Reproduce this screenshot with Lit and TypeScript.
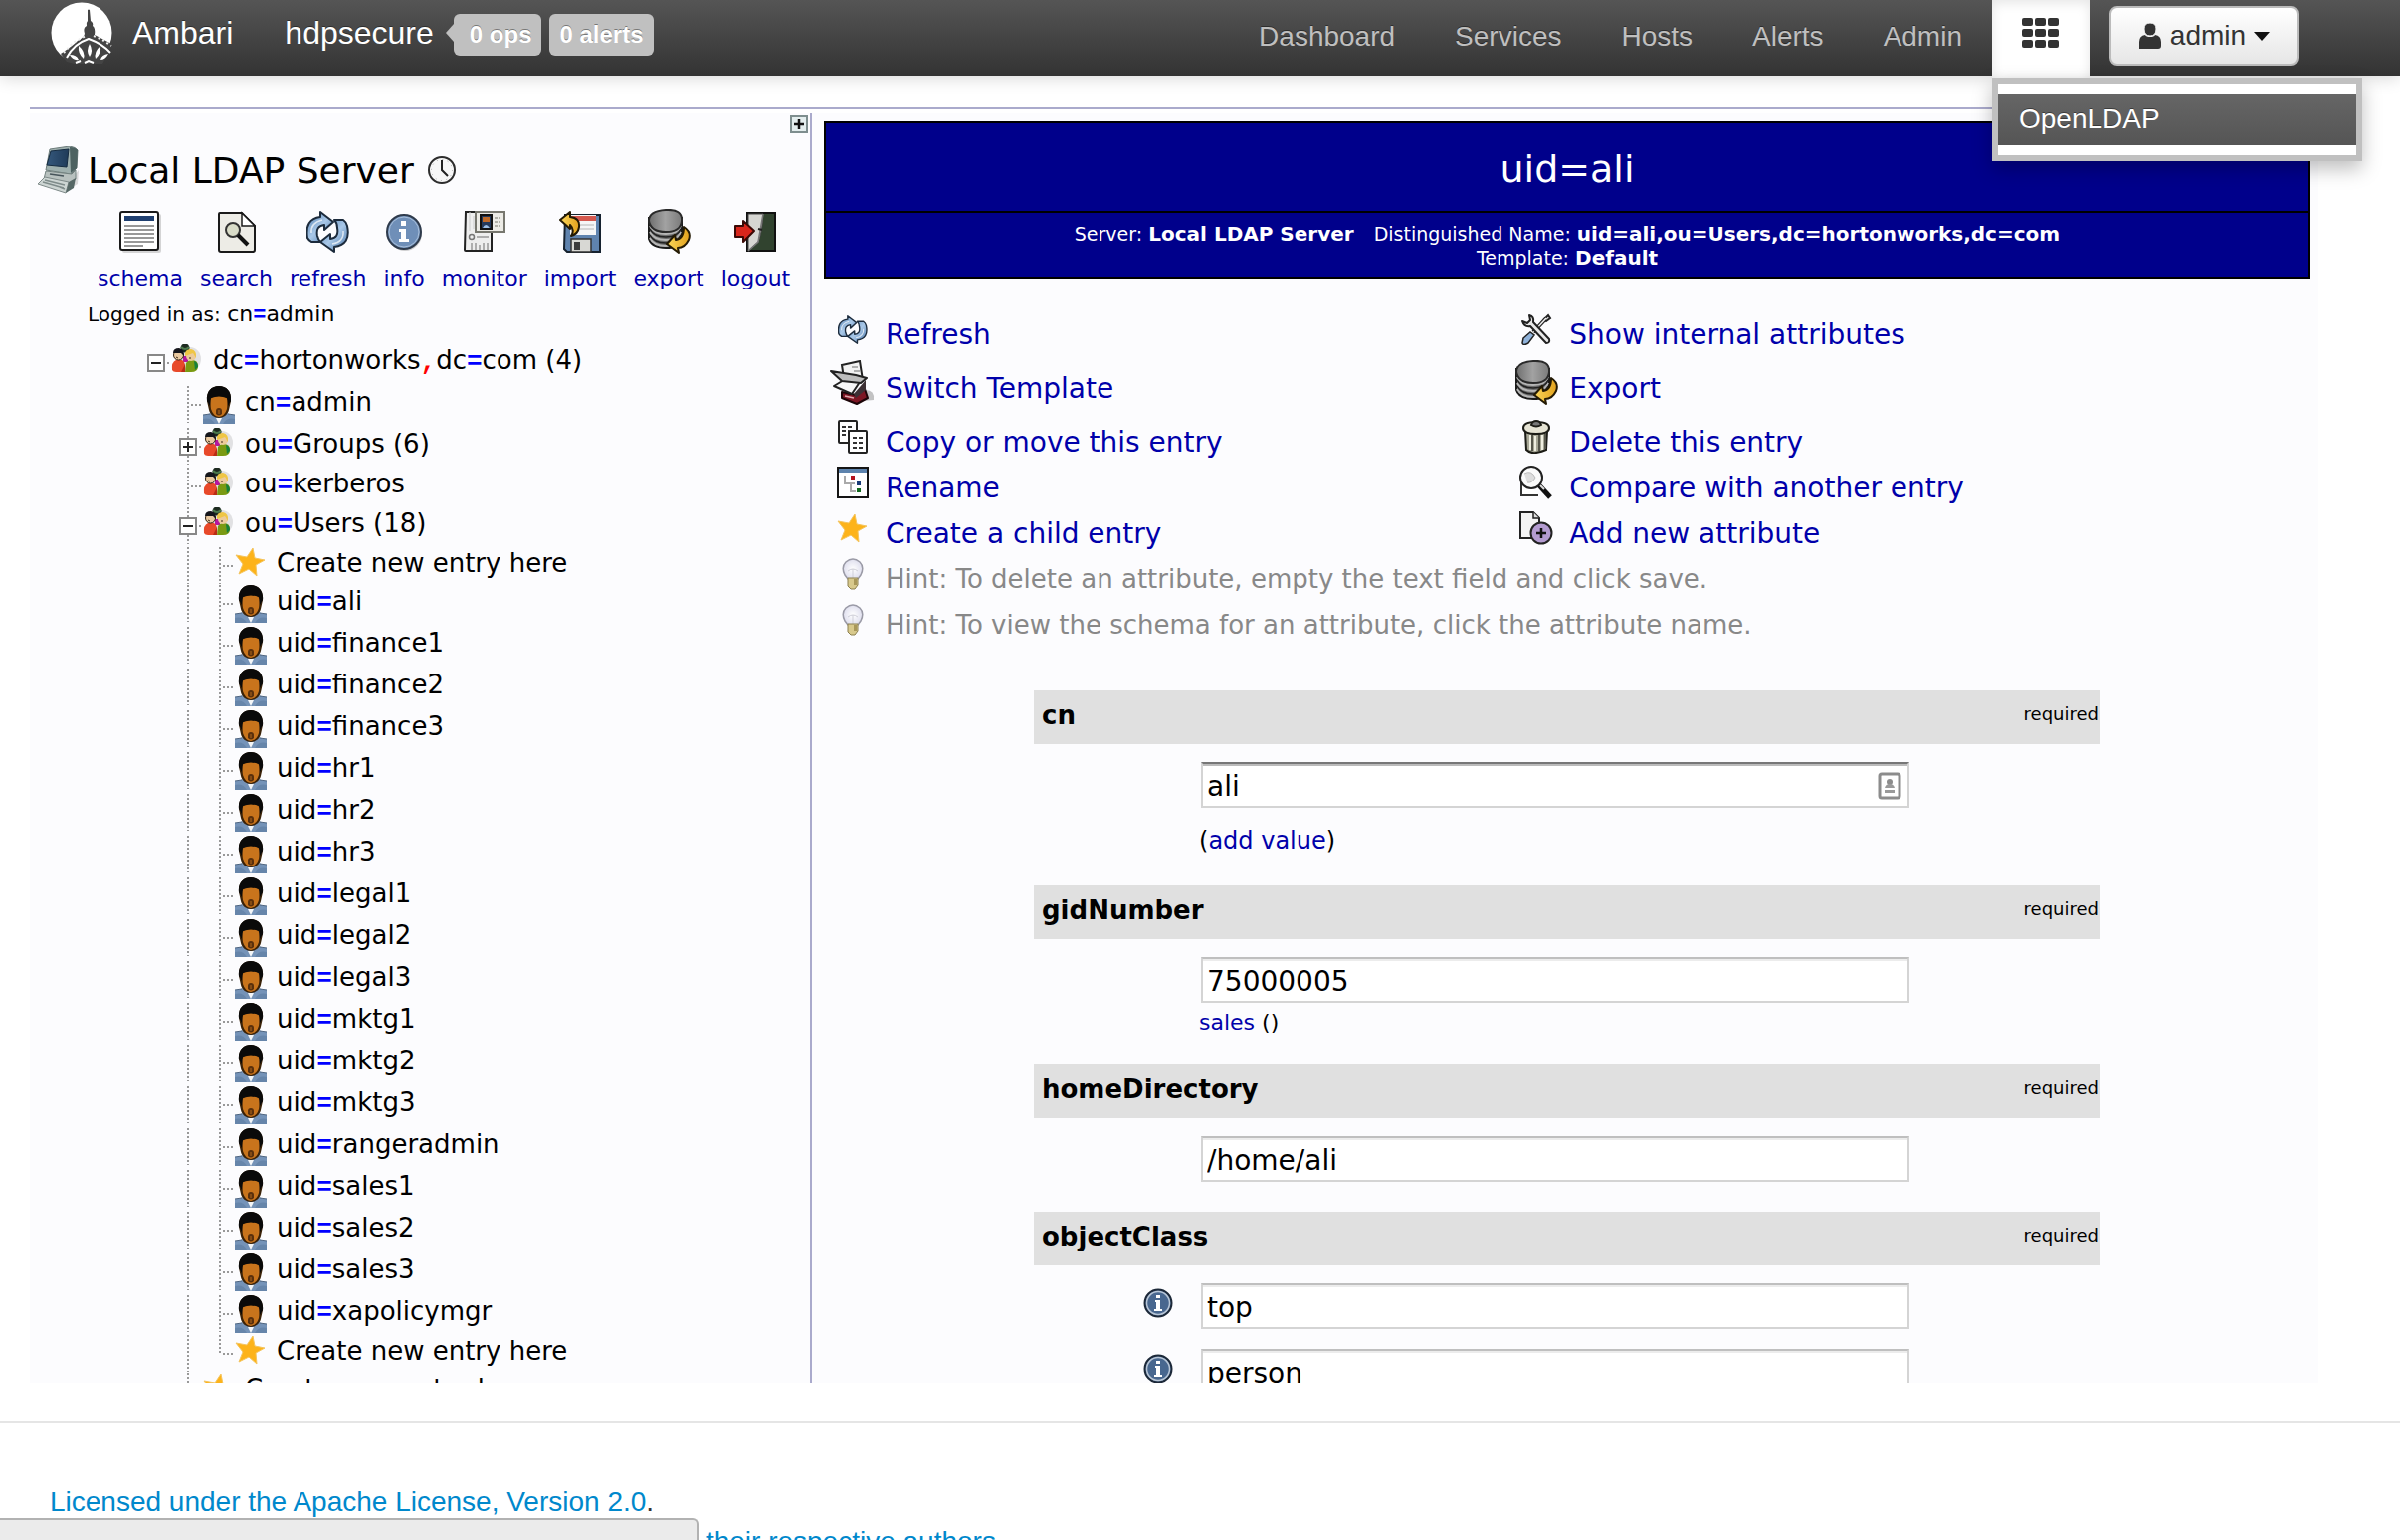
import { LitElement, html, svg, css, nothing, TemplateResult, SVGTemplateResult } from "lit";
import { customElement, property, state } from "lit/decorators.js";
import { classMap } from "lit/directives/class-map.js";

type Icon = { w: number; h: number; art: SVGTemplateResult };

const personArt = svg`
  <path d="M0 38V29Q5 29 8 27H24Q27 29 32 29V38Z" fill="#7593b8"/>
  <path d="M0 38V33Q8 31 12 38ZM32 38V33Q24 31 20 38Z" fill="#6685aa"/>
  <path d="M0 29L7 28M32 29L25 28" stroke="#4f6580" stroke-width="1"/>
  <path d="M13 32L16 38L19 32Z" fill="#f4f6f8"/>
  <path d="M4 15C3 5 9 0 16 0S29 5 28 15L26 24C25 29 20 32 16 32S7 29 6 24Z" fill="#3a2208"/>
  <path d="M7 14Q9 10 16 10T25 14L24 23Q22 30 16 31Q10 30 8 23Z" fill="#c8741c"/>
  <path d="M4 15C3 5 9 0 16 0S29 5 28 15L25 20L24 12Q16 9 8 12L7 20Z" fill="#0a0a0a"/>
  <path d="M13 28V25Q13 22 16 22T19 25V28Q16 31 13 28Z" fill="#5a300c"/>
  <path d="M15 25H17M16 26V28" stroke="#b0661a" stroke-width="1" fill="none"/>`;

const peopleArt = svg`
  <ellipse cx="19" cy="15" rx="11" ry="12" fill="#555" opacity=".16"/>
  <circle cx="14" cy="4" r="4.500" fill="#1d2a20"/>
  <path d="M10 3Q14 7 18 3" stroke="#4d7a4d" stroke-width="2" fill="none"/>
  <path d="M12 12H17V18H12Z" fill="#b5179e"/>
  <path d="M1 26Q0 18 5 16H11Q15 18 14 28H5Q2 28 1 26Z" fill="#e8492a"/>
  <path d="M10 28L14 20V28Z" fill="#b92c14"/>
  <path d="M14 28L15 19Q17 16 21 16Q27 16 27 22Q27 28 20 28Z" fill="#7a9a12"/>
  <path d="M23 17Q27 18 27 23L24 26Z" fill="#16803a"/>
  <circle cx="7.500" cy="11" r="5" fill="#e9c9a0" stroke="#302010" stroke-width="1"/>
  <path d="M2 9Q2 4 8 4Q13 5 13 12L10 9Z" fill="#15161c"/>
  <circle cx="20" cy="12" r="5" fill="#eccb9a"/>
  <path d="M14 12Q13 5 20 5Q26 6 25 14L22 9Z" fill="#efc645"/>
  <path d="M5 13L7 14M18 14H20" stroke="#3c2a1a" stroke-width="1"/>`;

const starArt = svg`
  <path d="M18 1L20 11L30 13L21 18L22 29L14 22L4 27L8 17L1 8L12 10Z" fill="#fdb31a" stroke="#f4c560" stroke-width="1" stroke-linejoin="round"/>`;

const refreshArt = svg`
  <path d="M1 27Q-2 8 14 6V1L27 11L18 19V14Q9 15 11 25Q12 29 14 31H5Q2 29 1 27Z" fill="url(#blueFill)" stroke="#1c2b3c" stroke-width="2" stroke-linejoin="round"/>
  <path d="M41 15Q45 34 28 36V41L14 31L24 23V28Q33 27 31 17Q31 12 28 9H37Q40 11 41 15Z" fill="url(#blueFill)" stroke="#1c2b3c" stroke-width="2" stroke-linejoin="round"/>
  <path d="M5 22Q4 12 16 9M37 20Q38 31 26 33" stroke="#fff" stroke-width="1.500" fill="none" opacity=".7"/>`;

const exportArt = svg`
  <path d="M2 9V30Q5 39 19 39T35 30V9Z" fill="#6c6c6c" stroke="#1a1a1a" stroke-width="2"/>
  <path d="M3 17Q7 25 19 25T34 17M3 23Q7 31 19 31T34 23M3 29Q7 37 19 37T34 29" fill="none" stroke="#b5b5b5" stroke-width="2"/>
  <path d="M3 20Q7 28 19 28T34 20M3 26Q7 34 19 34T34 26" fill="none" stroke="#222" stroke-width="1.500"/>
  <path d="M2 12Q2 2 19 1T35 12Q34 23 19 23T2 12Z" fill="url(#greyFill)" stroke="#2a2a2a" stroke-width="2"/>
  <path d="M37 18Q45 23 42 31Q38 39 31 39L32 44L20 35L28 26L29 31Q37 30 37 18Z" fill="url(#goldFill)" stroke="#241a04" stroke-width="2" stroke-linejoin="round"/>`;

const infoArt = svg`
  <circle cx="20" cy="22" r="17" fill="#777" opacity=".35"/>
  <circle cx="19" cy="20" r="17" fill="#6f8fb8" stroke="#2f3b4c" stroke-width="2"/>
  <circle cx="19" cy="20" r="15" fill="none" stroke="#a9bfda" stroke-width="1"/>
  <path d="M16 9H21V14H16ZM14 17H21V27H24V30H14V27H16V20H14Z" fill="#fff"/>`;

const bulbArt = svg`
  <path d="M3 17Q-1 9 4 4Q11-2 18 4Q23 9 19 17L16 21H6Z" fill="url(#bulbFill)" stroke="#9a9aa6" stroke-width="1.500"/>
  <path d="M6 13Q11 9 16 13M11 11V20" stroke="#cfcfd8" stroke-width="1" fill="none"/>
  <path d="M6 20H16V27L13 31H9L6 28Z" fill="#d8c98c" stroke="#8c8050" stroke-width="1"/>
  <path d="M12 21H15V27H12Z" fill="#a9985a"/>`;

const icons: Record<string, Icon> = {
  person: { w: 32, h: 38, art: personArt },
  people: { w: 32, h: 28, art: peopleArt },
  star: { w: 32, h: 30, art: starArt },
  refresh: { w: 43, h: 42, art: refreshArt },
  export: { w: 45, h: 46, art: exportArt },
  info: { w: 38, h: 40, art: infoArt },
  bulb: { w: 22, h: 32, art: bulbArt },
  computer: {
    w: 42, h: 48, art: svg`
    <path d="M30 44L40 38L41 24L36 30Z" fill="#888" opacity=".3"/>
    <path d="M12 3L32 0Q38 1 40 4L39 22L33 28L8 24Z" fill="#9fb0ae" stroke="#6d7c7b" stroke-width="1"/>
    <path d="M32 1Q38 1 40 4L39 22L33 27Z" fill="#4d6261"/>
    <path d="M13 5L31 3L29 21L9 19Z" fill="url(#screenFill)" stroke="#152b40" stroke-width="1"/>
    <path d="M8 25L34 28L38 24L38 33L31 38L6 33Z" fill="#b8c1bf" stroke="#738280" stroke-width="1"/>
    <path d="M12 28L26 30" stroke="#46545a" stroke-width="1.500"/>
    <path d="M7 31L31 36L28 47L0 38Z" fill="#cdd5d3" stroke="#7e8a89" stroke-width="1"/>
    <path d="M7 34L27 39M5 36L26 42M22 41L27 43" stroke="#7e8b8a" stroke-width="1.500"/>
    <path d="M31 36L38 32L36 42L28 47Z" fill="#566866"/>`,
  },
  clock: {
    w: 28, h: 28, art: svg`
    <circle cx="14" cy="14" r="13" fill="#f7f7f7" stroke="#2d2d2d" stroke-width="2"/>
    <circle cx="14" cy="14" r="10.500" fill="none" stroke="#aaa" stroke-width="1" stroke-dasharray="1 4.500"/>
    <path d="M14 4V14L20 20" fill="none" stroke="#222" stroke-width="2"/>`,
  },
  schema: {
    w: 42, h: 42, art: svg`
    <rect x="3" y="3" width="39" height="39" rx="2" fill="#999" opacity=".4"/>
    <rect x="1" y="1" width="38" height="38" rx="2" fill="#fff" stroke="#1a1a1a" stroke-width="2"/>
    <rect x="5" y="5" width="30" height="5" fill="#1f3f70"/>
    <path d="M5 15H35M5 19H35M5 23H35M5 27H35M5 31H35M5 35H24" stroke="#777" stroke-width="1.500"/>`,
  },
  search: {
    w: 38, h: 42, art: svg`
    <path d="M1 3Q1 2 2 2H24L37 15V39Q37 41 35 41H3Q1 41 1 39Z" fill="#edece6" stroke="#1a1a1a" stroke-width="2"/>
    <path d="M24 2V15H37Z" fill="#fff" stroke="#1a1a1a" stroke-width="1.500"/>
    <circle cx="15" cy="19" r="7" fill="#d9dcc8" stroke="#333" stroke-width="2"/>
    <path d="M20 24L30 34" stroke="#111" stroke-width="4"/>`,
  },
  monitor: {
    w: 42, h: 42, art: svg`
    <path d="M2 1H28V40H2Q1 40 1 39Z" fill="#eee" stroke="#222" stroke-width="2"/>
    <path d="M6 1V20M10 5V18" stroke="#ccc" stroke-width="1"/>
    <rect x="12" y="1" width="29" height="20" fill="#ecebe6" stroke="#77776f" stroke-width="2"/>
    <rect x="17" y="4" width="11" height="14" fill="#243a5c" stroke="#111" stroke-width="2"/>
    <path d="M19 6H26V11H19Z" fill="#c06a28"/><path d="M19 17Q22 11 26 17Z" fill="#9cc0e8"/>
    <path d="M31 7H37M31 11H37M31 15H37" stroke="#b0b0a8" stroke-width="2" stroke-dasharray="3 1"/>
    <circle cx="8" cy="26" r="2.500" fill="none" stroke="#777" stroke-width="1.500"/>
    <path d="M13 26H25M8 32V39M12 32V39M16 34V39M20 32V39M24 32V39" stroke="#999" stroke-width="1.500"/>`,
  },
  import: {
    w: 42, h: 42, art: svg`
    <path d="M6 4H41V41H8L5 38Z" fill="#5f83ae" stroke="#16222f" stroke-width="2"/>
    <rect x="11" y="4" width="26" height="20" fill="#f6f6f6"/>
    <rect x="11" y="5" width="26" height="5" fill="#d5584e"/>
    <path d="M14 14H35M14 18H35" stroke="#ccc" stroke-width="1.500"/>
    <rect x="12" y="28" width="20" height="13" fill="#d8d8d4" stroke="#333" stroke-width="1.500"/>
    <rect x="15" y="31" width="6" height="8" fill="#3b3b3b"/>
    <path d="M1 9L11 1V6Q21 7 20 16Q19 23 12 25Q16 19 11 14V18Z" fill="url(#goldFill)" stroke="#241a04" stroke-width="2" stroke-linejoin="round"/>`,
  },
  logout: {
    w: 42, h: 42, art: svg`
    <rect x="13" y="2" width="28" height="38" fill="#31432f" stroke="#111" stroke-width="2"/>
    <path d="M14 3H29Q28 22 24 31L14 40Z" fill="#d6d6d2" stroke="#444" stroke-width="1"/>
    <path d="M29 3L24 31L14 40" fill="none" stroke="#777" stroke-width="1.500"/>
    <path d="M24 18L28 19" stroke="#222" stroke-width="2"/>
    <path d="M1 15H9V10L20 20L9 31V26H1Z" fill="#d8261c" stroke="#3a0a06" stroke-width="2" stroke-linejoin="round"/>`,
  },
  template: {
    w: 46, h: 46, art: svg`
    <path d="M22 42L44 40Q45 30 36 30Z" fill="#555" opacity=".35"/>
    <path d="M12 5L30 1L33 20L14 18Z" fill="#f2f2f2" stroke="#222" stroke-width="2"/>
    <path d="M22 7H28M24 11H30" stroke="#999" stroke-width="1.500"/>
    <path d="M12 32L26 35L34 26L38 38L27 44L12 38Z" fill="#7d1724" stroke="#1c0508" stroke-width="2" stroke-linejoin="round"/>
    <path d="M15 36L24 38" stroke="#e0a9ae" stroke-width="1.500"/>
    <path d="M4 26L14 20L30 22L22 34Z" fill="#f7f7f7" stroke="#222" stroke-width="2" stroke-linejoin="round"/>
    <path d="M24 34L36 20V30L26 38Z" fill="#3c3034"/>
    <path d="M1 11L26 15L37 18L31 23L12 21Z" fill="#bdbdbd" stroke="#222" stroke-width="2" stroke-linejoin="round"/>`,
  },
  copy: {
    w: 30, h: 34, art: svg`
    <rect x="1" y="1" width="18" height="22" rx="1" fill="#fff" stroke="#222" stroke-width="2"/>
    <path d="M4 7H15M4 11H11M4 15H9" stroke="#333" stroke-width="2" stroke-dasharray="4 2"/>
    <rect x="11" y="11" width="18" height="22" rx="1" fill="#fff" stroke="#222" stroke-width="2"/>
    <path d="M15 18H26M15 23H26M15 28H26" stroke="#333" stroke-width="2" stroke-dasharray="4 2"/>`,
  },
  rename: {
    w: 32, h: 32, art: svg`
    <rect x="1" y="1" width="30" height="30" fill="#fff" stroke="#151515" stroke-width="2"/>
    <rect x="2" y="2" width="28" height="4" fill="#5d83ad"/>
    <path d="M8 9V17H18M14 17V25H19" fill="none" stroke="#aaa" stroke-width="2"/>
    <rect x="14" y="9" width="4" height="4" fill="#b3121c"/>
    <rect x="20" y="15" width="4" height="4" fill="#1b3c78"/>
    <rect x="20" y="22" width="4" height="4" fill="#12691f"/>`,
  },
  tools: {
    w: 32, h: 32, art: svg`
    <path d="M26 5L13 19" stroke="#222" stroke-width="4"/>
    <path d="M28 2L30 5L26 8L24 6Z" fill="#ddd" stroke="#222" stroke-width="2"/>
    <path d="M26 5L13 19" stroke="#eee" stroke-width="1.500"/>
    <path d="M3 25L10 19L14 22L8 30Q3 33 2 30Z" fill="#8fb2da" stroke="#222" stroke-width="1.500"/>
    <path d="M9 2Q14 3 13 9L29 26Q30 30 26 30L10 13Q4 14 2 8L7 10L10 7Z" fill="#e8e8e8" stroke="#222" stroke-width="2" stroke-linejoin="round"/>`,
  },
  trash: {
    w: 28, h: 34, art: svg`
    <path d="M3 11L4 30Q8 34 14 33T24 30L25 11Z" fill="#a7a796" stroke="#1c1c16" stroke-width="2"/>
    <path d="M8 15V30M13 16V31M20 15V30" stroke="#efeee0" stroke-width="2"/>
    <path d="M10 15V31M17 15V31M23 14V29" stroke="#55554a" stroke-width="2"/>
    <path d="M1 8Q1 2 14 2T27 8Q27 14 14 14T1 8Z" fill="#e6e4d4" stroke="#1c1c16" stroke-width="2"/>
    <path d="M9 5Q10 1 14 1T19 5Q14 8 9 5Z" fill="#777" stroke="#1c1c16" stroke-width="2"/>`,
  },
  compare: {
    w: 34, h: 34, art: svg`
    <path d="M2 10V30H19" fill="#fff" stroke="#333" stroke-width="2"/>
    <circle cx="12" cy="12" r="11" fill="#fafafa" stroke="#222" stroke-width="2"/>
    <path d="M5 8Q12 4 16 12Q13 18 8 17" fill="#ddd" stroke="#bbb" stroke-width="1"/>
    <path d="M20 20L31 32" stroke="#111" stroke-width="5"/>
    <path d="M21 20L25 24" stroke="#ddd" stroke-width="2"/>`,
  },
  add: {
    w: 34, h: 34, art: svg`
    <path d="M1 1H14L20 7V27H1Z" fill="#f3f3f3" stroke="#222" stroke-width="2"/>
    <path d="M14 1V7H20" fill="#ddd" stroke="#222" stroke-width="1.500"/>
    <circle cx="22" cy="22" r="10.500" fill="#b39bd0" stroke="#222" stroke-width="2"/>
    <path d="M22 17V27M17 22H27" stroke="#111" stroke-width="2.500"/>`,
  },
  objectInfo: {
    w: 30, h: 30, art: svg`
    <circle cx="15" cy="15" r="13.500" fill="#48678f" stroke="#1c2838" stroke-width="2"/>
    <circle cx="15" cy="15" r="11.500" fill="none" stroke="#b9c6d6" stroke-width="1.500"/>
    <path d="M13 7H17V10H13ZM12 12H17V21H19V23H11V21H13V14H12Z" fill="#fff"/>`,
  },
  contact: {
    w: 24, h: 28, art: svg`
    <rect x="2" y="2" width="20" height="24" rx="2" fill="#fff" stroke="#8c8c8c" stroke-width="3"/>
    <circle cx="12" cy="10" r="3" fill="#8c8c8c"/>
    <path d="M7 16Q8 12 12 12T17 16ZM7 18H17V21H7Z" fill="#9a9a9a"/>`,
  },
  expand: {
    w: 18, h: 18, art: svg`
    <rect x="1" y="1" width="16" height="16" fill="#e4eeee" stroke="#7e8e8e" stroke-width="2"/>
    <path d="M9 4V14M4 9H14" stroke="#111" stroke-width="2.500"/>`,
  },
  user: {
    w: 24, h: 26, art: svg`
    <path d="M1 26V19Q1 13 7 12Q8 14 12 14T17 12Q23 13 23 19V23Q23 26 20 26Z" fill="#333"/>
    <path d="M6 6Q6 0 12 0T18 6Q18 13 12 13T6 6Z" fill="#333" stroke="#f4f4f4" stroke-width="1"/>`,
  },
  grid: {
    w: 38, h: 30, art: svg`
    ${[0, 13, 26].map((x) => [0, 11, 22].map((y) => svg`<rect x=${x} y=${y} width="11" height="8" rx="2" fill="#333"/>`))}`,
  },
  logo: {
    w: 62, h: 62, art: svg`
    <circle cx="31" cy="31" r="30.500" fill="#fff"/>
    <path d="M37 8Q38 7 39 8L40 19Q43 21 42 24Q45 26 44 33Q52 37 61 42L60 47L52 62H24L16 60L10 52Q22 44 27 39Q33 36 34 32Q32 26 36 24Q35 21 37 19Z" fill="#444"/>
    <path d="M13 51L22 41L35 34M43 34L52 38L61 44" stroke="#eee" stroke-width="2" stroke-dasharray="2 3" fill="none"/>
    <path d="M16 56Q23 42 38 37Q52 42 60 51" stroke="#fff" stroke-width="2" fill="none"/>
    <path d="M39 42Q43 49 39 55Q35 49 39 42ZM28 44Q35 50 33 57Q27 52 28 44ZM50 44Q43 50 45 57Q51 52 50 44ZM19 53Q26 53 28 58Q22 59 19 53ZM58 52Q51 53 50 58Q55 58 58 52Z" fill="#fff"/>
    <path d="M25 61L30 59M34 61L38 59L43 61" stroke="#fff" stroke-width="2" fill="none"/>`,
  },
};

const icon = (name: string, scale = 1): TemplateResult => {
  const i = icons[name];
  return html`<svg class="icon" width=${Math.round(i.w * scale)} height=${Math.round(i.h * scale)} viewBox="0 0 ${i.w} ${i.h}" aria-hidden="true">${i.art}</svg>`;
};

type Guide = "blank" | "line" | "tee" | "end" | "plus" | "minus" | "root";
type TreeRow = { guides: Guide[]; icon: string; label: string; size: string };

const guideArt = (g: Guide): SVGTemplateResult => {
  const up = svg`<path d="M17 0V19" class="dots"/>`;
  const down = svg`<path d="M17 20V38" class="dots"/>`;
  const right = svg`<path d="M20 19H32" class="dots"/>`;
  const box = svg`<rect x="9" y="11" width="16" height="16" fill="#fff" stroke="#888" stroke-width="2"/><path d="M12 19H22" stroke="#222" stroke-width="2"/>`;
  switch (g) {
    case "blank": return svg``;
    case "line": return svg`${up}${down}`;
    case "tee": return svg`${up}${down}${right}`;
    case "end": return svg`${up}${right}`;
    case "root": return svg`${right}${box}`;
    case "minus": return svg`${up}${down}${right}${box}`;
    case "plus": return svg`${up}${down}${right}${box}<path d="M17 14V24" stroke="#222" stroke-width="2"/>`;
  }
};

const users = [
  "ali", "finance1", "finance2", "finance3", "hr1", "hr2", "hr3", "legal1", "legal2", "legal3",
  "mktg1", "mktg2", "mktg3", "rangeradmin", "sales1", "sales2", "sales3", "xapolicymgr",
];

const tree: TreeRow[] = [
  { guides: ["root"], icon: "people", label: "dc=hortonworks,dc=com (4)", size: "tall" },
  { guides: ["blank", "tee"], icon: "person", label: "cn=admin", size: "tall" },
  { guides: ["blank", "plus"], icon: "people", label: "ou=Groups (6)", size: "mid" },
  { guides: ["blank", "tee"], icon: "people", label: "ou=kerberos", size: "mid" },
  { guides: ["blank", "minus"], icon: "people", label: "ou=Users (18)", size: "mid" },
  { guides: ["blank", "line", "tee"], icon: "star", label: "Create new entry here", size: "low" },
  ...users.map((u, i): TreeRow => ({
    guides: ["blank", "line", "tee"], icon: "person", label: `uid=${u}`, size: i === users.length - 1 ? "mid" : "tall",
  })),
  { guides: ["blank", "line", "end"], icon: "star", label: "Create new entry here", size: "low" },
  { guides: ["blank", "tee"], icon: "star", label: "Create new entry here", size: "low" },
];

const dn = (text: string) =>
  text.split(/([=,])/).map((part) =>
    part === "=" ? html`<b class="eq">=</b>` : part === "," ? html`<b class="comma">,</b>` : part);

@customElement("top-bar")
export class TopBar extends LitElement {
  @state() private open = true;

  static styles = css`
    :host { display: block; position: relative; z-index: 2; }
    .bar {
      display: flex; align-items: stretch; height: 76px; padding: 0 102px 0 50px;
      background: linear-gradient(#555, #333); box-shadow: 0 2px 16px rgba(0, 0, 0, .16);
      font: 28px/74px "Liberation Sans", Arial, sans-serif; color: #bfbfbf;
    }
    a { color: inherit; text-decoration: none; text-shadow: 0 -1px 0 rgba(0, 0, 0, .4); }
    .brand { display: flex; align-items: center; color: #fff; font-size: 32px; line-height: 66px; height: 66px; }
    .brand svg { margin: 0 20px 0 1px; }
    .cluster { margin: 0 8px 0 52px; }
    .badge {
      position: relative; background: #c0c0c0; border-radius: 6px; font-size: 24px; line-height: 42px;
      font-weight: bold; padding: 0 10px; margin: 4px 8px 0 12px;
    }
    .badge.ops { padding-left: 16px; }
    .badge + .badge { margin-left: 0; }
    .badge.ops::before {
      content: ""; position: absolute; left: -8px; top: 10px;
      border: solid transparent; border-width: 9px 8px 9px 0; border-right-color: #c0c0c0;
    }
    nav { display: flex; margin-left: auto; }
    nav a { padding: 0 30px; }
    .views { position: relative; width: 98px; margin-right: 20px; }
    .tab {
      width: 98px; height: 78px; padding: 0 0 10px; border: 0; background: #fff;
      box-shadow: inset 0 3px 12px rgba(0, 0, 0, .1); cursor: pointer;
    }
    .menu {
      position: absolute; top: 78px; left: 0; width: 360px; margin: 0; padding: 10px 0; list-style: none;
      background: #fff; border: 6px solid #c0c0c0; box-shadow: 0 8px 18px rgba(0, 0, 0, .25);
    }
    .menu a {
      display: block; padding: 0 21px; line-height: 52px; color: #fff;
      background: linear-gradient(#666, #555);
    }
    .account {
      align-self: flex-start; display: flex; align-items: center; justify-content: center; gap: 8px;
      width: 190px; height: 60px; margin-top: 6px; padding: 0; border: 2px solid #bbb; border-radius: 8px;
      background: linear-gradient(#fff, #e6e6e6); color: #333; font: inherit; line-height: 56px; cursor: pointer;
    }
    .caret { border: solid transparent; border-width: 9px 8px 0; border-top-color: #111; }
  `;

  render() {
    return html`
      <header class="bar">
        <div class="brand">
          ${icon("logo")}
          <a href="#ambari">Ambari</a>
          <a class="cluster" href="#cluster">hdpsecure</a>
          <a class="badge ops" href="#ops">0 ops</a>
          <a class="badge" href="#alerts-count">0 alerts</a>
        </div>
        <nav>
          ${["Dashboard", "Services", "Hosts", "Alerts", "Admin"].map((n) => html`<a href="#${n.toLowerCase()}">${n}</a>`)}
        </nav>
        <div class="views">
          <button class="tab" aria-label="Views" aria-expanded=${this.open} @click=${() => (this.open = !this.open)}>${icon("grid")}</button>
          ${this.open ? html`<ul class="menu"><li><a href="#openldap">OpenLDAP</a></li></ul>` : nothing}
        </div>
        <button class="account">${icon("user")}admin<span class="caret"></span></button>
      </header>`;
  }
}

const gradients = svg`
  <defs>
    <linearGradient id="blueFill" x1="0" y1="0" x2="1" y2="1"><stop offset="0" stop-color="#4e7cae"/><stop offset=".5" stop-color="#a9c8e8"/><stop offset="1" stop-color="#3f6da0"/></linearGradient>
    <linearGradient id="greyFill"><stop offset="0" stop-color="#6e6e6e"/><stop offset=".5" stop-color="#a2a2a2"/><stop offset="1" stop-color="#7a7a7a"/></linearGradient>
    <linearGradient id="goldFill"><stop offset="0" stop-color="#fbd75a"/><stop offset="1" stop-color="#e2a11c"/></linearGradient>
    <linearGradient id="screenFill"><stop offset="0" stop-color="#35587c"/><stop offset="1" stop-color="#1f3a58"/></linearGradient>
    <radialGradient id="bulbFill"><stop offset="0" stop-color="#fff"/><stop offset="1" stop-color="#dfdfee"/></radialGradient>
  </defs>`;

const shared = css`
  :host { display: block; }
  a { color: #0000aa; text-decoration: none; }
  .icon { display: block; flex: none; }
  .defs { position: absolute; width: 0; height: 0; }
`;

@customElement("ldap-tree")
export class LdapTree extends LitElement {
  static styles = [shared, css`
    :host { position: relative; padding: 34px 0 0 8px; border-right: 2px solid #aaaacc; }
    .expand { position: absolute; top: 2px; right: 2px; padding: 0; border: 0; background: none; }
    .server { display: flex; align-items: center; height: 46px; margin: 0; font-size: 36px; font-weight: normal; gap: 8px; }
    .server span { margin-right: 6px; }
    .tools { display: flex; gap: 17px; margin: 18px 0 0 60px; padding: 0; list-style: none; }
    .tools a { display: flex; flex-direction: column; align-items: center; gap: 12px; font-size: 22px; line-height: 28px; }
    .glyph { height: 42px; display: flex; align-items: center; }
    .login { margin: 8px 0 14px 50px; font-size: 20px; line-height: 28px; }
    .login span { font-size: 22px; }
    .eq, .comma { font-family: "Liberation Mono", "Courier New", monospace; }
    .eq { color: #00f; }
    .comma { color: #f00; }
    .rows { margin: 0; padding: 0 0 0 102px; list-style: none; font-size: 26px; line-height: 32px; white-space: nowrap; }
    .row { display: flex; align-items: flex-start; }
    .tall { height: 42px; }
    .mid { height: 40px; }
    .low { height: 38px; }
    .row a { display: flex; gap: 10px; color: #000; }
    .label { white-space: pre; }
    .dots { stroke: #999; stroke-width: 2; stroke-dasharray: 2 2; fill: none; }
  `];

  render() {
    const tools = ["schema", "search", "refresh", "info", "monitor", "import", "export", "logout"];
    return html`
      <svg class="defs" aria-hidden="true">${gradients}</svg>
      <button class="expand" aria-label="Expand">${icon("expand")}</button>
      <h1 class="server">${icon("computer")}<span>Local LDAP Server</span>${icon("clock")}</h1>
      <ul class="tools">
        ${tools.map((t) => html`<li><a href="#${t}"><span class="glyph">${icon(t)}</span>${t}</a></li>`)}
      </ul>
      <p class="login">Logged in as: <span>${dn("cn=admin")}</span></p>
      <ul class="rows">
        ${tree.map((r) => html`
          <li class="row ${r.size}">
            ${r.guides.map((g) => html`<svg class="icon" width="32" height="37" viewBox="0 0 32 37" aria-hidden="true">${guideArt(g)}</svg>`)}
            <a href="#entry">${icon(r.icon)}<span class="label">${dn(r.label)}</span></a>
          </li>`)}
      </ul>`;
  }
}

type Attribute = { name: string; values: string[]; extra?: "add" | "group"; info?: boolean };

const attributes: Attribute[] = [
  { name: "cn", values: ["ali"], extra: "add" },
  { name: "gidNumber", values: ["75000005"], extra: "group" },
  { name: "homeDirectory", values: ["/home/ali"] },
  { name: "objectClass", values: ["top", "person"], info: true },
];

@customElement("ldap-entry")
export class LdapEntry extends LitElement {
  @property({ attribute: false }) attributesList: Attribute[] = attributes;

  static styles = [shared, css`
    :host { padding: 8px 8px 0 12px; }
    .head { border: 2px solid #000; background: #00008b; color: #fff; text-align: center; }
    .head h2 { margin: 0; padding-top: 4px; font-size: 38px; font-weight: normal; line-height: 84px; border-bottom: 2px solid #000; }
    .head p { margin: 0; padding: 9px 0 7px; font-size: 19px; line-height: 24px; }
    .head b { font-size: 20px; }
    .dn { margin-left: 20px; }
    .actions { display: grid; grid-template-columns: 46fr 54fr; margin-top: 33px; font-size: 28px; }
    .action { display: flex; align-items: center; gap: 4px; height: 46px; white-space: nowrap; }
    .action.big { height: 62px; }
    .action .glyph { display: flex; justify-content: center; width: 58px; padding-bottom: 10px; }
    .action.hint { grid-column: span 2; font-size: 26px; color: #888; }
    .attrs { width: 72%; max-width: 1072px; margin: 43px auto 0; }
    .bar { display: flex; justify-content: space-between; height: 54px; padding: 0 2px 0 8px; background: #e0e0e0; font-size: 26px; line-height: 50px; }
    .bar label { font-weight: bold; }
    .bar span { font-size: 18px; line-height: 47px; }
    .body { display: flex; flex-direction: column; gap: 20px; padding: 18px 0 30px; }
    .value { display: grid; grid-template-columns: 168px 712px; }
    .value .glyph { display: flex; padding: 5px 0 0 110px; }
    .field { position: relative; }
    input {
      box-sizing: border-box; width: 100%; height: 46px; padding: 4px 4px 2px; border: 2px solid #d4d4d4; border-top: 2px solid #bfbfbf;
      box-shadow: inset 0 2px 0 #ececec; background: #fff; color: #000; outline: 0;
      font: 28px "DejaVu Sans", Verdana, sans-serif;
    }
    .first input { border-top-color: #777; box-shadow: inset 0 2px 0 #bbb; }
    .field .icon { position: absolute; right: 8px; top: 10px; }
    .note { grid-column: 2; margin-left: -2px; }
    .add { padding-top: 18px; font-size: 24px; line-height: 30px; }
    .group { padding-top: 8px; font-size: 22px; line-height: 24px; }
  `];

  private action(name: string, text: string, scale = 1, big = false) {
    return html`<a class=${classMap({ action: true, big })} href="#${name}"><span class="glyph">${icon(name, scale)}</span>${text}</a>`;
  }

  private hint(text: string) {
    return html`<div class="action hint"><span class="glyph">${icon("bulb")}</span>${text}</div>`;
  }

  private attribute(a: Attribute, first: boolean) {
    return html`
      <section>
        <div class="bar"><label for="${a.name}-0">${a.name}</label><span>required</span></div>
        <div class="body">
          ${a.values.map((v, i) => html`
            <div class=${classMap({ value: true, first })}>
              <span class="glyph">${a.info ? icon("objectInfo") : nothing}</span>
              <div class="field">
                <input id="${a.name}-${i}" type="text" aria-label=${a.name} .value=${v}>
                ${first ? icon("contact") : nothing}
              </div>
              ${a.extra === "add" ? html`<div class="note add">(<a href="#add-value">add value</a>)</div>` : nothing}
              ${a.extra === "group" ? html`<div class="note group"><a href="#sales">sales</a> ()</div>` : nothing}
            </div>`)}
        </div>
      </section>`;
  }

  render() {
    return html`
      <svg class="defs" aria-hidden="true">${gradients}</svg>
      <div class="head">
        <h2>uid=ali</h2>
        <p>Server: <b>Local LDAP Server</b><span class="dn">Distinguished Name: <b>uid=ali,ou=Users,dc=hortonworks,dc=com</b></span><br>Template: <b>Default</b></p>
      </div>
      <div class="actions">
        ${this.action("refresh", "Refresh", 0.7)}
        ${this.action("tools", "Show internal attributes")}
        ${this.action("template", "Switch Template", 1, true)}
        ${this.action("export", "Export", 1, true)}
        ${this.action("copy", "Copy or move this entry")}
        ${this.action("trash", "Delete this entry")}
        ${this.action("rename", "Rename")}
        ${this.action("compare", "Compare with another entry")}
        ${this.action("star", "Create a child entry")}
        ${this.action("add", "Add new attribute")}
        ${this.hint("Hint: To delete an attribute, empty the text field and click save.")}
        ${this.hint("Hint: To view the schema for an attribute, click the attribute name.")}
      </div>
      <div class="attrs">${this.attributesList.map((a, i) => this.attribute(a, i === 0))}</div>`;
  }
}

@customElement("app-root")
export class AppRoot extends LitElement {
  static styles = css`
    :host {
      display: flex; flex-direction: column; height: 100vh; overflow: hidden; position: relative; background: #fff;
      font-family: "DejaVu Sans", Verdana, sans-serif; color: #000;
    }
    .frame { flex: 1; min-height: 0; overflow: hidden; margin: 32px 82px 0 30px; border-top: 2px solid #aaaacc; padding-top: 4px; }
    .panes { display: grid; grid-template-columns: 786px minmax(0, 1fr); background: #fcfcfe; }
    footer {
      flex: none; box-sizing: border-box; height: 120px; margin-top: 38px; padding: 60px 50px 0; overflow: hidden;
      border-top: 2px solid #e5e5e5; font: 28px/40px "Liberation Sans", Arial, sans-serif; color: #333;
    }
    footer a { color: #0088cc; text-decoration: none; }
    .status {
      position: absolute; left: 0; bottom: 0; width: 700px; height: 20px; background: #ebebeb;
      border: solid #b2b2b2; border-width: 2px 2px 0 0; border-radius: 0 6px 0 0;
    }
  `;

  render() {
    return html`
      <top-bar></top-bar>
      <main class="frame">
        <div class="panes">
          <ldap-tree></ldap-tree>
          <ldap-entry></ldap-entry>
        </div>
      </main>
      <footer>
        <a href="#license">Licensed under the Apache License, Version 2.0</a>.<br>
        <a href="#third-party">See third-party tools/resources that Ambari uses and their respective authors</a>
      </footer>
      <div class="status"></div>`;
  }
}
